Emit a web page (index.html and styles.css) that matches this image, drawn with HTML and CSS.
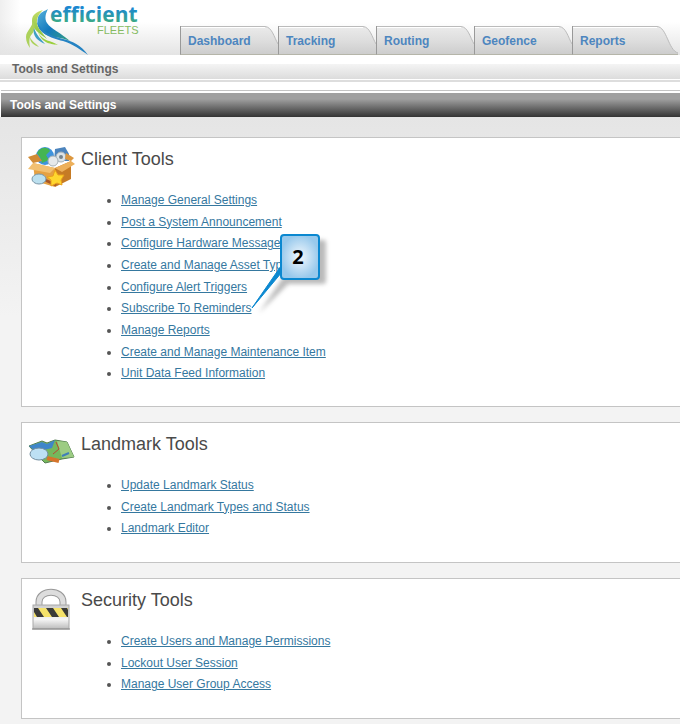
FILE: index.html
```html
<!DOCTYPE html>
<html lang="en">
<head>
<meta charset="utf-8">
<title>Tools and Settings</title>
<link rel="stylesheet" href="styles.css">
</head>
<body>
<header class="top">
  <svg class="logo" viewBox="0 0 120 54" role="img" aria-label="efficient fleets">
    <defs>
      <linearGradient id="word" x1="0" y1="0" x2="0" y2="1"><stop offset="0.3" stop-color="#1b87d0"/><stop offset="0.85" stop-color="#3fae7d"/></linearGradient>
      <linearGradient id="wing" x1="0" y1="0" x2="1" y2="1"><stop offset="0" stop-color="#58b3dc"/><stop offset="0.5" stop-color="#1379bd"/><stop offset="1" stop-color="#35a080"/></linearGradient>
      <linearGradient id="leaf" x1="0" y1="0" x2="0" y2="1"><stop offset="0" stop-color="#c5dc6a"/><stop offset="0.5" stop-color="#a3cf50"/><stop offset="1" stop-color="#86c040"/></linearGradient>
      <linearGradient id="tab-fill" x1="0" y1="0" x2="0" y2="1"><stop offset="0" stop-color="#ebebeb"/><stop offset="0.5" stop-color="#dedede"/><stop offset="1" stop-color="#cdcdcd"/></linearGradient>
    </defs>
    <path d="M28 8C25 10 20 11 18 16C16 24 19 29 25 33C31 37 42 36 50 40C41 32 31 28 27 22C24 17 26 12 28 8Z" fill="url(#wing)"/>
    <path d="M17 21C18 32 30 37 43 40C53 43 61 49 68 54C61 44 52 40 43 38C31 35 22 31 17 21Z" fill="#2583c3"/>
    <path d="M23 9C17 11 12 13 12 20C12 28 20 33 27 38C20 29 16 25 17 19C18 14 20 12 23 9Z" fill="url(#leaf)"/>
    <path d="M12 19C14 26 6 29 6 36C6 41 8 44 10 47C9 40 9 36 12 33C16 28 15 23 12 19Z" fill="#acd15b"/>
    <path d="M14 27C12 35 18 40 25 43C21 38 17 35 14 27Z" fill="#3f9fc5"/>
    <path d="M10 36C12 41 16 42 19 46C14 44 10 42 10 36Z" fill="#acd15b"/>
    <path d="M18 31C23 41 31 39 38 44C32 43 22 43 18 31Z" fill="#9bcf3c"/>
    <text class="logo-word" x="30" y="21" fill="url(#word)">efficient</text>
    <text class="logo-sub" x="77" y="33">FLEETS</text>
  </svg>
  <nav class="tabs">
    <a class="tab" href="#"><svg class="tab-shape" viewBox="0 0 97 28"><path d="M0 .5H84C91 1 93 11 97 18V28H0Z"/><path class="shine" d="M0 1.5H84"/><path class="edge" d="M0 .5H84C91 1 93 11 97 18"/></svg><span>Dashboard</span></a>
    <a class="tab" href="#"><svg class="tab-shape" viewBox="0 0 97 28"><path d="M0 .5H84C91 1 93 11 97 18V28H0Z"/><path class="shine" d="M0 1.5H84"/><path class="edge" d="M0 .5H84C91 1 93 11 97 18"/></svg><span>Tracking</span></a>
    <a class="tab" href="#"><svg class="tab-shape" viewBox="0 0 97 28"><path d="M0 .5H84C91 1 93 11 97 18V28H0Z"/><path class="shine" d="M0 1.5H84"/><path class="edge" d="M0 .5H84C91 1 93 11 97 18"/></svg><span>Routing</span></a>
    <a class="tab" href="#"><svg class="tab-shape" viewBox="0 0 97 28"><path d="M0 .5H84C91 1 93 11 97 18V28H0Z"/><path class="shine" d="M0 1.5H84"/><path class="edge" d="M0 .5H84C91 1 93 11 97 18"/></svg><span>Geofence</span></a>
    <a class="tab last" href="#"><svg class="tab-shape" viewBox="0 0 105 28"><path d="M0 .5H84C94 1 95 24 105 27V28H0Z"/><path class="shine" d="M0 1.5H84"/><path class="edge" d="M0 .5H84C94 1 95 24 105 27"/></svg><span>Reports</span></a>
  </nav>
</header>
<div class="crumb">Tools and Settings</div>
<h1 class="title">Tools and Settings</h1>
<main class="content">
  <section class="panel client">
    <svg class="icon" viewBox="0 0 48 48" aria-hidden="true">
      <circle cx="17" cy="12" r="9" fill="#3f93dc"/><path d="M9 9C13 2 20 3 22 7L18 11L21 16L14 19L12 13Z" fill="#45b552"/>
      <path d="M27 5L37 3L41 10V17H26Z" fill="#4c84bd"/><circle cx="33" cy="13" r="5" fill="#dce3e7" stroke="#a1adb5"/><circle cx="33" cy="13" r="2" fill="#74838c"/><circle cx="25" cy="17" r="5" fill="#e6e9eb" stroke="#a7b0b5"/>
      <path d="M5 19L27 24V43L7 37Z" fill="#e5a143"/><path d="M27 24L43 17V35L27 43Z" fill="#c67b25"/><path d="M5 19L0 13L9 10L14 17Z" fill="#d18b35"/><path d="M5 19L27 24L22 29L0 25Z" fill="#f2c071"/><path d="M43 17L47 20L34 28L27 24Z" fill="#edb05b"/><path d="M38 9L46 14L43 17L37 15Z" fill="#dc973f"/>
      <path d="M17 36L28 41" stroke="#a75625" stroke-width="3"/><ellipse cx="11" cy="35" rx="7" ry="5" fill="#bce0ef" stroke="#7996a7"/>
      <path d="M27 26L30 31L36 31L33 36L34 41L29 39L23 42L23 36L19 33L25 32Z" fill="#ffd72e" stroke="#eba11c"/>
    </svg>
    <div class="body">
      <h2>Client Tools</h2>
      <ul class="long">
        <li><a href="#">Manage General Settings</a></li>
        <li><a href="#">Post a System Announcement</a></li>
        <li><a href="#">Configure Hardware Messages</a></li>
        <li><a href="#">Create and Manage Asset Types</a></li>
        <li><a href="#">Configure Alert Triggers</a></li>
        <li><a href="#">Subscribe To Reminders</a></li>
        <li><a href="#">Manage Reports</a></li>
        <li><a href="#">Create and Manage Maintenance Item</a></li>
        <li><a href="#">Unit Data Feed Information</a></li>
      </ul>
    </div>
    <svg class="callout" viewBox="0 0 84 90" role="img" aria-label="2">
      <defs><radialGradient id="badge"><stop offset="0" stop-color="#f3f8fd"/><stop offset="1" stop-color="#98c9ec"/></radialGradient></defs>
      <path class="shade" d="M36 7H74Q76 7 76 10V48Q76 51 73 51H38L9 80L34 43Z"/>
      <path d="M31 33L2 75L32 39Z" fill="#0b88d0" stroke="#0b88d0"/>
      <rect x="31" y="2" width="38" height="44" rx="3" fill="url(#badge)" stroke="#0b88d0" stroke-width="2"/>
      <text x="48" y="31" text-anchor="middle">2</text>
    </svg>
  </section>
  <section class="panel landmark">
    <svg class="icon" viewBox="0 0 48 48" aria-hidden="true">
      <path d="M1 17L14 12L19 14L27 11L39 13L46 28L34 30L17 34L12 29Z" fill="#75b85c" stroke="#547c50"/><path d="M1 17L14 13L19 15L27 11L24 19L8 23Z" fill="#3f86c9"/><path d="M29 12L39 13L46 28L34 29Z" fill="#9ccc83"/><path d="M28 13L31 20L25 25" fill="none" stroke="#ba4733"/><path d="M34 27L41 24" stroke="#3f7fb9" stroke-width="2"/><path d="M19 29L31 32" stroke="#d5742c" stroke-width="4"/><ellipse cx="11" cy="25" rx="9" ry="6" fill="#bde0f4" stroke="#728c9f"/>
    </svg>
    <div class="body">
      <h2>Landmark Tools</h2>
      <ul>
        <li><a href="#">Update Landmark Status</a></li>
        <li><a href="#">Create Landmark Types and Status</a></li>
        <li><a href="#">Landmark Editor</a></li>
      </ul>
    </div>
  </section>
  <section class="panel security">
    <svg class="icon" viewBox="0 0 48 48" aria-hidden="true">
      <defs><linearGradient id="metal" x1="0" y1="0" x2="0" y2="1"><stop offset="0" stop-color="#ccc"/><stop offset="0.6" stop-color="#f5f5f5"/><stop offset="1" stop-color="#bbb"/></linearGradient></defs>
      <path d="M11 21V17C11 4 35 4 35 17V21" fill="none" stroke="#999" stroke-width="7"/><path d="M11 21V17C11 4 35 4 35 17V21" fill="none" stroke="#ddd" stroke-width="5"/><rect x="5" y="20" width="36" height="24" fill="url(#metal)" stroke="#aaa"/><rect x="6" y="23" width="34" height="9" fill="#f5e26a"/><path d="M6 23H10L16 32H9L6 27ZM18 23H25L31 32H24ZM33 23H39L40 25V32H39Z" fill="#3b3b38"/><path d="M4 44H42" stroke="#888" stroke-width="1"/>
    </svg>
    <div class="body">
      <h2>Security Tools</h2>
      <ul>
        <li><a href="#">Create Users and Manage Permissions</a></li>
        <li><a href="#">Lockout User Session</a></li>
        <li><a href="#">Manage User Group Access</a></li>
      </ul>
    </div>
  </section>
</main>
</body>
</html>
```
FILE: styles.css
```css
body { margin: 0; font-family: "Liberation Sans", Arial, sans-serif; font-size: 12px; color: #555; background: #fff; }
.top { display: flex; align-items: flex-end; height: 55px; background: linear-gradient(90deg, #e4e4e499, #fff0 20px), linear-gradient(#fff 40%, #e4e4e4); }
.logo { width: 120px; height: 54px; margin: 0 40px 0 20px; flex: none; overflow: visible; }
.logo-word { font: bold 21px "Open Sans", sans-serif; }
.logo-sub { font: 11px "Liberation Sans", sans-serif; fill: #86bb62; }
.tabs { display: flex; }
.tab { position: relative; box-sizing: border-box; width: 98px; height: 29px; padding-left: 7px; border-left: 1px solid #999; border-bottom: 1px solid #b5b5a9; font-weight: bold; line-height: 30px; color: #4d86bf; text-decoration: none; }
.tab.last { width: 106px; }
.tab-shape { position: absolute; left: 0; top: 0; width: 100%; height: 100%; fill: url(#tab-fill); }
.tab-shape .edge { fill: none; stroke: #bbb; }
.tab-shape .shine { stroke: #fff; }
.tab span { position: relative; }
.crumb { margin-top: 9px; padding-left: 12px; height: 15px; line-height: 11px; font-weight: bold; color: #666; background: linear-gradient(#f4f4f4, #dcdcdc); border-bottom: 1px solid #fff; box-shadow: 0 2px #ddd; }
.title { position: relative; margin: 13px 0 0 1px; padding-left: 9px; height: 24px; line-height: 24px; font-size: 12px; color: #fff; background: linear-gradient(#a0a0a0 25%, #333); box-shadow: 0 -2px #fff, 0 -3px #c4c4c4; }
.content { padding: 20px 0 5px 21px; background: linear-gradient(#e5e5e5, #f3f3f3 200px); }
.panel { position: relative; display: flex; box-sizing: border-box; margin-bottom: 15px; padding: 6px; background: #fff; border: 1px solid #c4c4c4; border-right: 0; }
.client { min-height: 270px; }
.landmark, .security { min-height: 141px; }
.icon { width: 48px; height: 48px; flex: none; }
.body { margin-left: 5px; }
h2 { margin: 5px 0 21px; font-size: 18px; font-weight: normal; line-height: 20px; color: #4a4a4a; }
ul { display: grid; grid-auto-rows: 1fr; margin: 0; padding-left: 40px; min-height: 65px; }
.long { min-height: 195px; }
li { line-height: 21px; }
a { color: #35789f; }
.callout { position: absolute; left: 228px; top: 95px; width: 84px; height: 90px; }
.callout text { font: bold 20px "Open Sans", sans-serif; fill: #000; }
.shade { fill: #777; opacity: .5; filter: blur(2px); }
```
